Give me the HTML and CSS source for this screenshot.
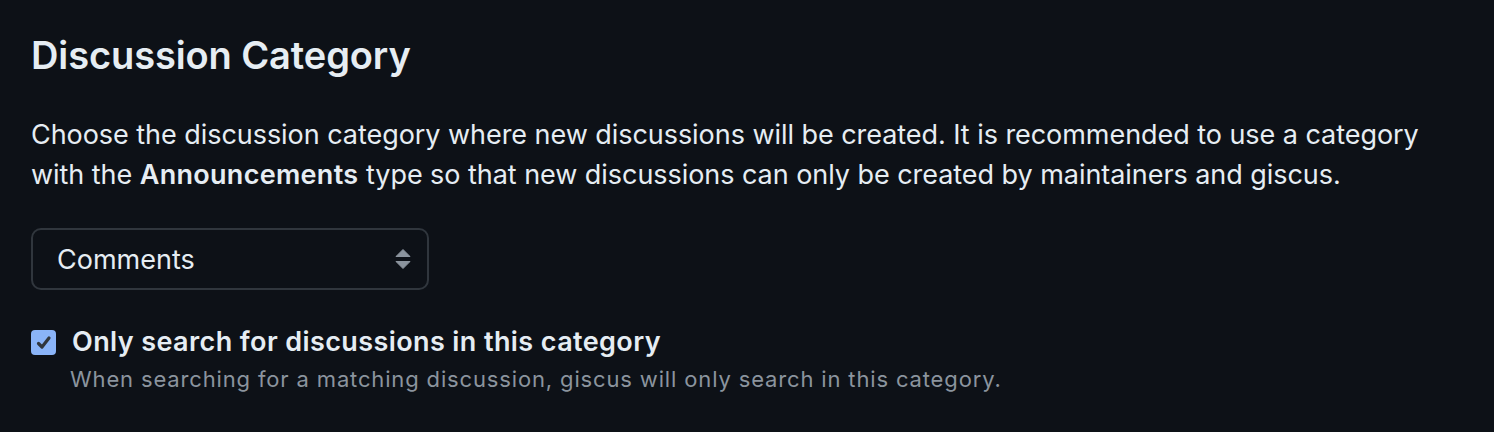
FILE: index.html
```html
<!DOCTYPE html>
<html lang="en">
<head>
<meta charset="utf-8">
<title>Discussion Category</title>
<link rel="stylesheet" href="styles.css">
</head>
<body>
<section class="section">
  <h3 class="title">Discussion Category</h3>
  <p class="desc">Choose the discussion category where new discussions will be created. It is recommended to use a category with the <strong>Announcements</strong> type so that new discussions can only be created by maintainers and giscus.</p>
  <div class="select">
    <span class="select-value">Comments</span>
    <svg class="select-arrows" width="16" height="24" viewBox="0 0 16 24"><path d="M8 2.5 L15 9.5 L1 9.5 Z" fill="#8b949e" stroke="#8b949e" stroke-width="1" stroke-linejoin="round"/><path d="M1 14.5 L15 14.5 L8 21.5 Z" fill="#8b949e" stroke="#8b949e" stroke-width="1" stroke-linejoin="round"/></svg>
  </div>
  <div class="check-row">
    <span class="checkbox"><svg width="20" height="20" viewBox="0 0 20 20"><path d="M4.5 10.5 L8 14 L15 5" fill="none" stroke="#30363d" stroke-width="3.2" stroke-linecap="round" stroke-linejoin="round"/></svg></span>
    <div class="check-text">
      <div class="check-label">Only search for discussions in this category</div>
      <div class="check-note">When searching for a matching discussion, giscus will only search in this category.</div>
    </div>
  </div>
</section>
</body>
</html>
```

FILE: styles.css
```css
html, body {
  margin: 0;
  padding: 0;
  background: #0d1117;
}
body {
  font-family: Inter, "Noto Sans", "Liberation Sans", sans-serif;
  color: #e6edf3;
}
.section {
  padding: 32px 31px 0 31px;
}
.title {
  margin: 0;
  font-size: 38px;
  font-weight: 600;
  line-height: 46px;
  letter-spacing: -0.1px;
  color: #e6edf3;
}
.desc {
  margin: 37px 0 0 0;
  font-size: 27px;
  line-height: 40px;
  letter-spacing: -0.05px;
  max-width: 1430px;
  color: #e6edf3;
}
.desc strong {
  font-weight: 600;
  letter-spacing: 0.3px;
}
.select {
  margin-top: 33px;
  width: 398px;
  height: 62px;
  box-sizing: border-box;
  border: 2px solid #30363d;
  border-radius: 10px;
  background: #0d1117;
  display: flex;
  align-items: center;
  justify-content: space-between;
  padding: 0 16px 0 24px;
}
.select-value {
  font-size: 27px;
  color: #e6edf3;
}
.check-row {
  display: flex;
  align-items: flex-start;
  gap: 16px;
  margin-top: 35px;
}
.checkbox {
  width: 25px;
  height: 25px;
  border-radius: 4px;
  background: #8ab4f8;
  display: flex;
  align-items: center;
  justify-content: center;
  margin-top: 5px;
  flex: none;
}
.check-label {
  font-size: 27px;
  font-weight: 600;
  line-height: 34px;
  letter-spacing: 0.4px;
}
.check-note {
  margin-top: 5px;
  margin-left: -2px;
  font-size: 22px;
  line-height: 30px;
  letter-spacing: 0.85px;
  color: #8b949e;
}
```
